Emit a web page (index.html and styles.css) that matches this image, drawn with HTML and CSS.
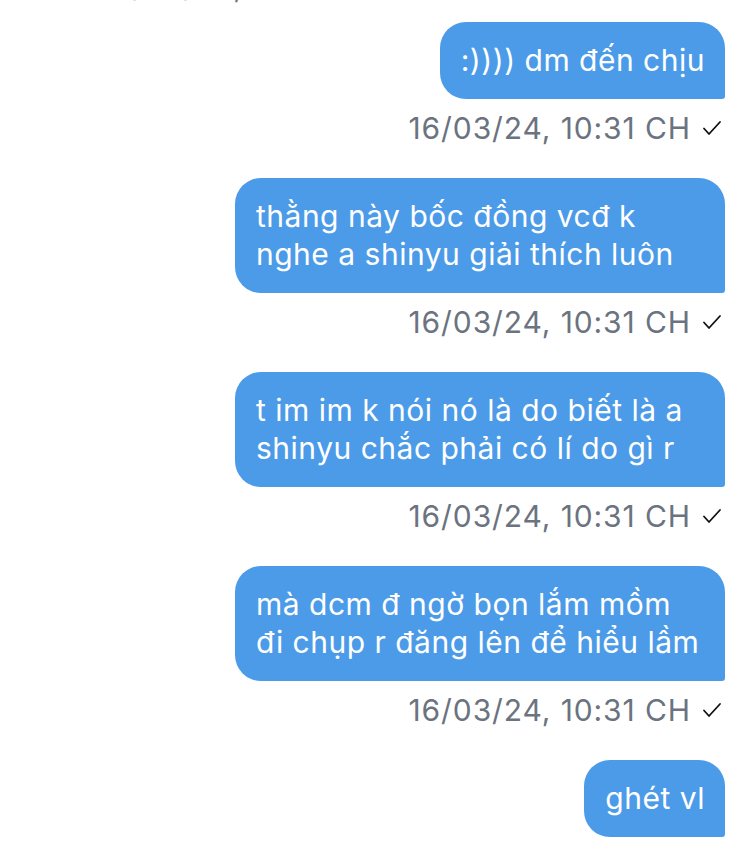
FILE: index.html
```html
<!DOCTYPE html>
<html lang="vi">
<head>
    <meta charset="UTF-8">
    <meta name="viewport" content="width=device-width, initial-scale=1.0">
    <title>Tin nhắn</title>
    <link rel="stylesheet" href="styles.css">
</head>
<body>
    <div class="chat">
        <div class="meta meta-in">16/03/24, 10:30 CH</div>

        <div class="message">
            <div class="bubble">:)))) dm đến chịu</div>
            <div class="meta">16/03/24, 10:31 CH <svg class="tick" viewBox="0 0 20 16"><polyline points="2,8.5 7,14 18,2"/></svg></div>
        </div>

        <div class="message">
            <div class="bubble">thằng này bốc đồng vcđ k nghe a shinyu giải thích luôn</div>
            <div class="meta">16/03/24, 10:31 CH <svg class="tick" viewBox="0 0 20 16"><polyline points="2,8.5 7,14 18,2"/></svg></div>
        </div>

        <div class="message">
            <div class="bubble">t im im k nói nó là do biết là a shinyu chắc phải có lí do gì r</div>
            <div class="meta">16/03/24, 10:31 CH <svg class="tick" viewBox="0 0 20 16"><polyline points="2,8.5 7,14 18,2"/></svg></div>
        </div>

        <div class="message">
            <div class="bubble">mà dcm đ ngờ bọn lắm mồm đi chụp r đăng lên để hiểu lầm</div>
            <div class="meta">16/03/24, 10:31 CH <svg class="tick" viewBox="0 0 20 16"><polyline points="2,8.5 7,14 18,2"/></svg></div>
        </div>

        <div class="message">
            <div class="bubble">ghét vl</div>
        </div>
    </div>
</body>
</html>
```

FILE: styles.css
```css
body {
    margin: 0;
    padding: 0;
    background: #fff;
    font-family: Inter, "Noto Sans", sans-serif;
    overflow: hidden;
}
.chat {
    display: flex;
    flex-direction: column;
    padding: 0 25px 0 25px;
}
.message {
    display: flex;
    flex-direction: column;
    align-items: flex-end;
    margin-bottom: 32px;
}
.bubble {
    max-width: 449px;
    padding: 19px 20px 20px 21px;
    background: #4c9be8;
    color: #fff;
    font-size: 30px;
    line-height: 38px;
    letter-spacing: 0.5px;
    border-radius: 26px 26px 3px 26px;
}
.meta {
    display: flex;
    align-items: center;
    gap: 11px;
    margin-top: 11px;
    margin-right: 3px;
    font-size: 30px;
    line-height: 36px;
    letter-spacing: 0.9px;
    color: #6b7380;
}
.meta-in {
    margin-top: -32px;
    margin-bottom: 18px;
    padding-left: 75px;
}
.tick {
    width: 20px;
    height: 16px;
    fill: none;
    stroke: #111;
    stroke-width: 1.8;
    stroke-linecap: round;
    stroke-linejoin: round;
}
```
